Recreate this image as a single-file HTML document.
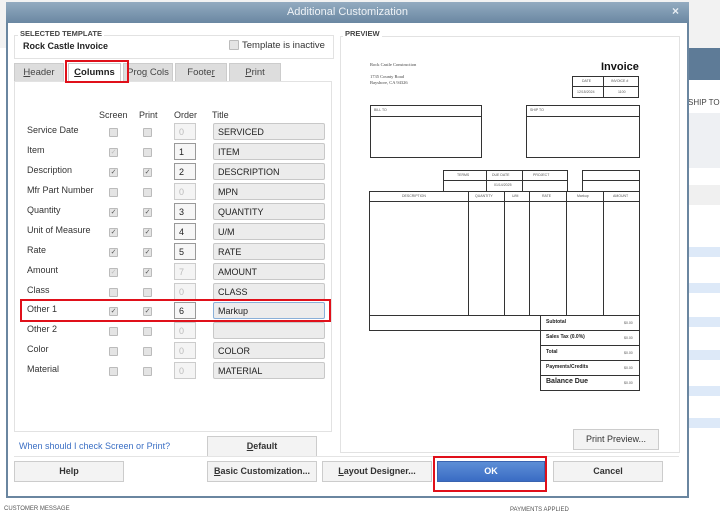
<!DOCTYPE html>
<html><head><meta charset="utf-8"><style>
*{margin:0;padding:0;box-sizing:border-box}
body{width:720px;height:513px;overflow:hidden;position:relative;background:#fff;font-family:"Liberation Sans",sans-serif;font-size:9px;color:#222}
.a{position:absolute}
.cb{position:absolute;width:9px;height:9px;border:1px solid #bbb;background:#e4e4e4;border-radius:1px;font-size:7px;line-height:7px;text-align:center;color:#555}
.ord{position:absolute;left:174px;width:22px;height:17px;border:1px solid #ccc;background:#f4f4f4;font-size:9px;padding:3px 0 0 4px;color:#bbb}
.ord.on{border-color:#999;color:#222;background:#f6f6f6}
.tt{position:absolute;left:213px;width:112px;height:17px;border:1px solid #c8c8c8;background:#ececec;border-radius:2px;font-size:9px;padding:3px 0 0 4px;color:#222}
.lb{position:absolute;left:27px;font-size:9px;color:#333}
.btn{position:absolute;height:21px;border:1px solid #ccc;background:#f3f3f3;font-size:9px;text-align:center;line-height:19px;color:#333;font-weight:bold}
.tab{position:absolute;top:63px;height:18px;background:#ddd;border:1px solid #ccc;border-bottom:none;text-align:center;font-size:9.5px;line-height:17px;color:#444}
.bx{position:absolute;border:1px solid #333}
.sm{position:absolute;font-size:3.5px;color:#555}
.vl{position:absolute;width:1px;background:#333}
.hl{position:absolute;height:1px;background:#333}
</style></head><body>
<!-- background app -->
<div class="a" style="left:0;top:0;width:720px;height:48px;background:#f2f2f2"></div>
<div class="a" style="left:688px;top:48px;width:32px;height:32px;background:#5e7b97"></div>
<div class="a" style="left:688px;top:98px;font-size:8px;color:#444">SHIP TO</div>
<div class="a" style="left:688px;top:113px;width:32px;height:55px;background:#eef0f3"></div>
<div class="a" style="left:688px;top:185px;width:32px;height:20px;background:#f0f0f0"></div>
<div class="a" style="left:688px;top:247px;width:32px;height:10px;background:#dde9f8"></div>
<div class="a" style="left:688px;top:283px;width:32px;height:10px;background:#dde9f8"></div>
<div class="a" style="left:688px;top:317px;width:32px;height:10px;background:#dde9f8"></div>
<div class="a" style="left:688px;top:350px;width:32px;height:10px;background:#dde9f8"></div>
<div class="a" style="left:688px;top:386px;width:32px;height:10px;background:#dde9f8"></div>
<div class="a" style="left:688px;top:418px;width:32px;height:10px;background:#dde9f8"></div>
<div class="a" style="left:4px;top:506px;font-size:6px;color:#555">CUSTOMER MESSAGE</div>
<div class="a" style="left:510px;top:507px;font-size:6px;color:#555">PAYMENTS APPLIED</div>
<!-- dialog -->
<div class="a" style="left:6px;top:3px;width:683px;height:495px;background:#fff;border:2px solid #6a86a0;border-top:none"></div>
<div class="a" style="left:6px;top:2px;width:683px;height:21px;background:linear-gradient(#93abc0,#6a87a2);color:#eef2f6;font-size:11px;text-align:center;line-height:21px">Additional Customization</div>
<div class="a" style="left:672px;top:4px;color:#e8eef4;font-size:12px;font-weight:bold">×</div>
<!-- selected template -->
<div class="a" style="left:14px;top:35px;width:320px;height:24px;border:1px solid #e2e2e2"></div>
<div class="a" style="left:18px;top:29px;font-size:7.5px;font-weight:bold;color:#444;background:#fff;padding:0 2px">SELECTED TEMPLATE</div>
<div class="a" style="left:23px;top:41px;font-size:9px;font-weight:bold">Rock Castle Invoice</div>
<div class="cb" style="left:229px;top:40px;width:10px;height:10px"></div>
<div class="a" style="left:242px;top:40px;font-size:9.5px;color:#333">Template is inactive</div>
<!-- tabs -->
<div class="tab" style="left:14px;width:50px"><u>H</u>eader</div>
<div class="tab" style="left:68px;width:53px;background:#fff;height:19px;font-weight:bold;color:#222"><u>C</u>olumns</div>
<div class="tab" style="left:123px;width:50px">Pro<u>g</u> Cols</div>
<div class="tab" style="left:175px;width:52px">Foote<u>r</u></div>
<div class="tab" style="left:229px;width:52px"><u>P</u>rint</div>
<div class="a" style="left:14px;top:81px;width:318px;height:351px;border:1px solid #e2e2e2"></div>
<div class="a" style="left:65px;top:60px;width:64px;height:23px;border:2.5px solid #e0101a"></div>
<!-- headers -->
<div class="a" style="left:99px;top:110px;font-size:9px;color:#333">Screen</div>
<div class="a" style="left:139px;top:110px;font-size:9px;color:#333">Print</div>
<div class="a" style="left:174px;top:110px;font-size:9px;color:#333">Order</div>
<div class="a" style="left:212px;top:110px;font-size:9px;color:#333">Title</div>
<!-- rows -->
<div class="lb" style="top:125px">Service Date</div><div class="cb" style="left:109px;top:128px"></div><div class="cb" style="left:143px;top:128px"></div><div class="ord" style="top:123px">0</div><div class="tt" style="top:123px">SERVICED</div>
<div class="lb" style="top:145px">Item</div><div class="cb" style="left:109px;top:148px;color:#bbb">✓</div><div class="cb" style="left:143px;top:148px"></div><div class="ord on" style="top:143px">1</div><div class="tt" style="top:143px">ITEM</div>
<div class="lb" style="top:165px">Description</div><div class="cb" style="left:109px;top:168px">✓</div><div class="cb" style="left:143px;top:168px">✓</div><div class="ord on" style="top:163px">2</div><div class="tt" style="top:163px">DESCRIPTION</div>
<div class="lb" style="top:185px">Mfr Part Number</div><div class="cb" style="left:109px;top:188px"></div><div class="cb" style="left:143px;top:188px"></div><div class="ord" style="top:183px">0</div><div class="tt" style="top:183px">MPN</div>
<div class="lb" style="top:205px">Quantity</div><div class="cb" style="left:109px;top:208px">✓</div><div class="cb" style="left:143px;top:208px">✓</div><div class="ord on" style="top:203px">3</div><div class="tt" style="top:203px">QUANTITY</div>
<div class="lb" style="top:225px">Unit of Measure</div><div class="cb" style="left:109px;top:228px">✓</div><div class="cb" style="left:143px;top:228px">✓</div><div class="ord on" style="top:223px">4</div><div class="tt" style="top:223px">U/M</div>
<div class="lb" style="top:245px">Rate</div><div class="cb" style="left:109px;top:248px">✓</div><div class="cb" style="left:143px;top:248px">✓</div><div class="ord on" style="top:243px">5</div><div class="tt" style="top:243px">RATE</div>
<div class="lb" style="top:265px">Amount</div><div class="cb" style="left:109px;top:268px;color:#bbb">✓</div><div class="cb" style="left:143px;top:268px">✓</div><div class="ord" style="top:263px">7</div><div class="tt" style="top:263px">AMOUNT</div>
<div class="lb" style="top:285px">Class</div><div class="cb" style="left:109px;top:288px"></div><div class="cb" style="left:143px;top:288px"></div><div class="ord" style="top:283px">0</div><div class="tt" style="top:283px">CLASS</div>
<div class="lb" style="top:304px">Other 1</div><div class="cb" style="left:109px;top:307px">✓</div><div class="cb" style="left:143px;top:307px">✓</div><div class="ord on" style="top:302px">6</div><div class="tt" style="top:302px;border-color:#8ab0d8">Markup</div>
<div class="lb" style="top:324px">Other 2</div><div class="cb" style="left:109px;top:327px"></div><div class="cb" style="left:143px;top:327px"></div><div class="ord" style="top:322px">0</div><div class="tt" style="top:322px"></div>
<div class="lb" style="top:344px">Color</div><div class="cb" style="left:109px;top:347px"></div><div class="cb" style="left:143px;top:347px"></div><div class="ord" style="top:342px">0</div><div class="tt" style="top:342px">COLOR</div>
<div class="lb" style="top:364px">Material</div><div class="cb" style="left:109px;top:367px"></div><div class="cb" style="left:143px;top:367px"></div><div class="ord" style="top:362px">0</div><div class="tt" style="top:362px">MATERIAL</div>
<div class="a" style="left:20px;top:299px;width:311px;height:23px;border:2.5px solid #e0101a"></div>
<div class="a" style="left:19px;top:441px;font-size:9px;color:#3b6fc4">When should I check Screen or Print?</div>
<div class="btn" style="left:207px;top:436px;width:110px"><u>D</u>efault</div>
<div class="a" style="left:14px;top:456px;width:665px;height:1px;background:#e4e4e4"></div>
<!-- bottom buttons -->
<div class="btn" style="left:14px;top:461px;width:110px">Help</div>
<div class="btn" style="left:207px;top:461px;width:110px"><u>B</u>asic Customization...</div>
<div class="btn" style="left:322px;top:461px;width:110px"><u>L</u>ayout Designer...</div>
<div class="btn" style="left:437px;top:461px;width:108px;background:linear-gradient(#5d8ed6,#3a6cc4);border-color:#3a64b0;color:#fff">OK</div>
<div class="btn" style="left:553px;top:461px;width:110px">Cancel</div>
<div class="a" style="left:433px;top:456px;width:114px;height:36px;border:2.5px solid #e0101a"></div>
<!-- preview -->
<div class="a" style="left:340px;top:36px;width:340px;height:417px;border:1px solid #e2e2e2"></div>
<div class="a" style="left:343px;top:29px;font-size:7.5px;font-weight:bold;color:#444;background:#fff;padding:0 2px">PREVIEW</div>
<div class="btn" style="left:573px;top:429px;width:86px;font-weight:normal;color:#333">Print Preview...</div>
<div class="a" style="left:370px;top:62px;font-family:'Liberation Serif',serif;font-size:4.5px;color:#444;line-height:6px">Rock Castle Construction<br><br style="line-height:3px">1735 County Road<br>Bayshore, CA 94326</div>
<div class="a" style="left:601px;top:61px;font-size:11px;font-weight:bold;color:#111">Invoice</div>
<div class="bx" style="left:572px;top:76px;width:67px;height:22px"></div>
<div class="hl" style="left:572px;top:86px;width:67px"></div><div class="vl" style="left:603px;top:76px;height:22px"></div>
<div class="sm" style="left:582px;top:79px">DATE</div><div class="sm" style="left:611px;top:79px">INVOICE #</div>
<div class="sm" style="left:577px;top:90px">12/15/2024</div><div class="sm" style="left:618px;top:90px">1100</div>
<div class="bx" style="left:370px;top:105px;width:112px;height:53px"></div><div class="hl" style="left:370px;top:116px;width:112px"></div><div class="sm" style="left:374px;top:108px">BILL TO</div>
<div class="bx" style="left:526px;top:105px;width:114px;height:53px"></div><div class="hl" style="left:526px;top:116px;width:114px"></div><div class="sm" style="left:530px;top:108px">SHIP TO</div>
<div class="bx" style="left:443px;top:170px;width:125px;height:22px"></div><div class="hl" style="left:443px;top:180px;width:125px"></div>
<div class="vl" style="left:486px;top:170px;height:22px"></div><div class="vl" style="left:522px;top:170px;height:22px"></div>
<div class="sm" style="left:457px;top:173px">TERMS</div><div class="sm" style="left:492px;top:173px">DUE DATE</div><div class="sm" style="left:533px;top:173px">PROJECT</div><div class="sm" style="left:494px;top:183px">01/14/2025</div>
<div class="bx" style="left:582px;top:170px;width:58px;height:22px"></div><div class="hl" style="left:582px;top:180px;width:58px"></div>
<div class="bx" style="left:369px;top:191px;width:271px;height:140px"></div>
<div class="hl" style="left:369px;top:201px;width:271px"></div>
<div class="hl" style="left:369px;top:315px;width:271px"></div>
<div class="vl" style="left:468px;top:191px;height:124px"></div><div class="vl" style="left:504px;top:191px;height:124px"></div><div class="vl" style="left:529px;top:191px;height:124px"></div><div class="vl" style="left:566px;top:191px;height:124px"></div><div class="vl" style="left:603px;top:191px;height:124px"></div>
<div class="sm" style="left:402px;top:194px">DESCRIPTION</div><div class="sm" style="left:475px;top:194px">QUANTITY</div><div class="sm" style="left:512px;top:194px">U/M</div><div class="sm" style="left:542px;top:194px">RATE</div><div class="sm" style="left:577px;top:194px">Markup</div><div class="sm" style="left:613px;top:194px">AMOUNT</div>
<div class="bx" style="left:540px;top:315px;width:100px;height:76px;background:#fff"></div>
<div class="hl" style="left:540px;top:330px;width:100px"></div><div class="hl" style="left:540px;top:345px;width:100px"></div><div class="hl" style="left:540px;top:360px;width:100px"></div><div class="hl" style="left:540px;top:375px;width:100px"></div>
<div class="a" style="left:546px;top:319px;font-size:5px;font-weight:bold">Subtotal</div>
<div class="a" style="left:546px;top:334px;font-size:5px;font-weight:bold">Sales Tax (0.0%)</div>
<div class="a" style="left:546px;top:349px;font-size:5px;font-weight:bold">Total</div>
<div class="a" style="left:546px;top:364px;font-size:5px;font-weight:bold">Payments/Credits</div>
<div class="a" style="left:546px;top:378px;font-size:7px;font-weight:bold">Balance Due</div>
<div class="sm" style="left:624px;top:321px">$0.00</div><div class="sm" style="left:624px;top:336px">$0.00</div><div class="sm" style="left:624px;top:351px">$0.00</div><div class="sm" style="left:624px;top:366px">$0.00</div><div class="sm" style="left:624px;top:381px">$0.00</div>
</body></html>
